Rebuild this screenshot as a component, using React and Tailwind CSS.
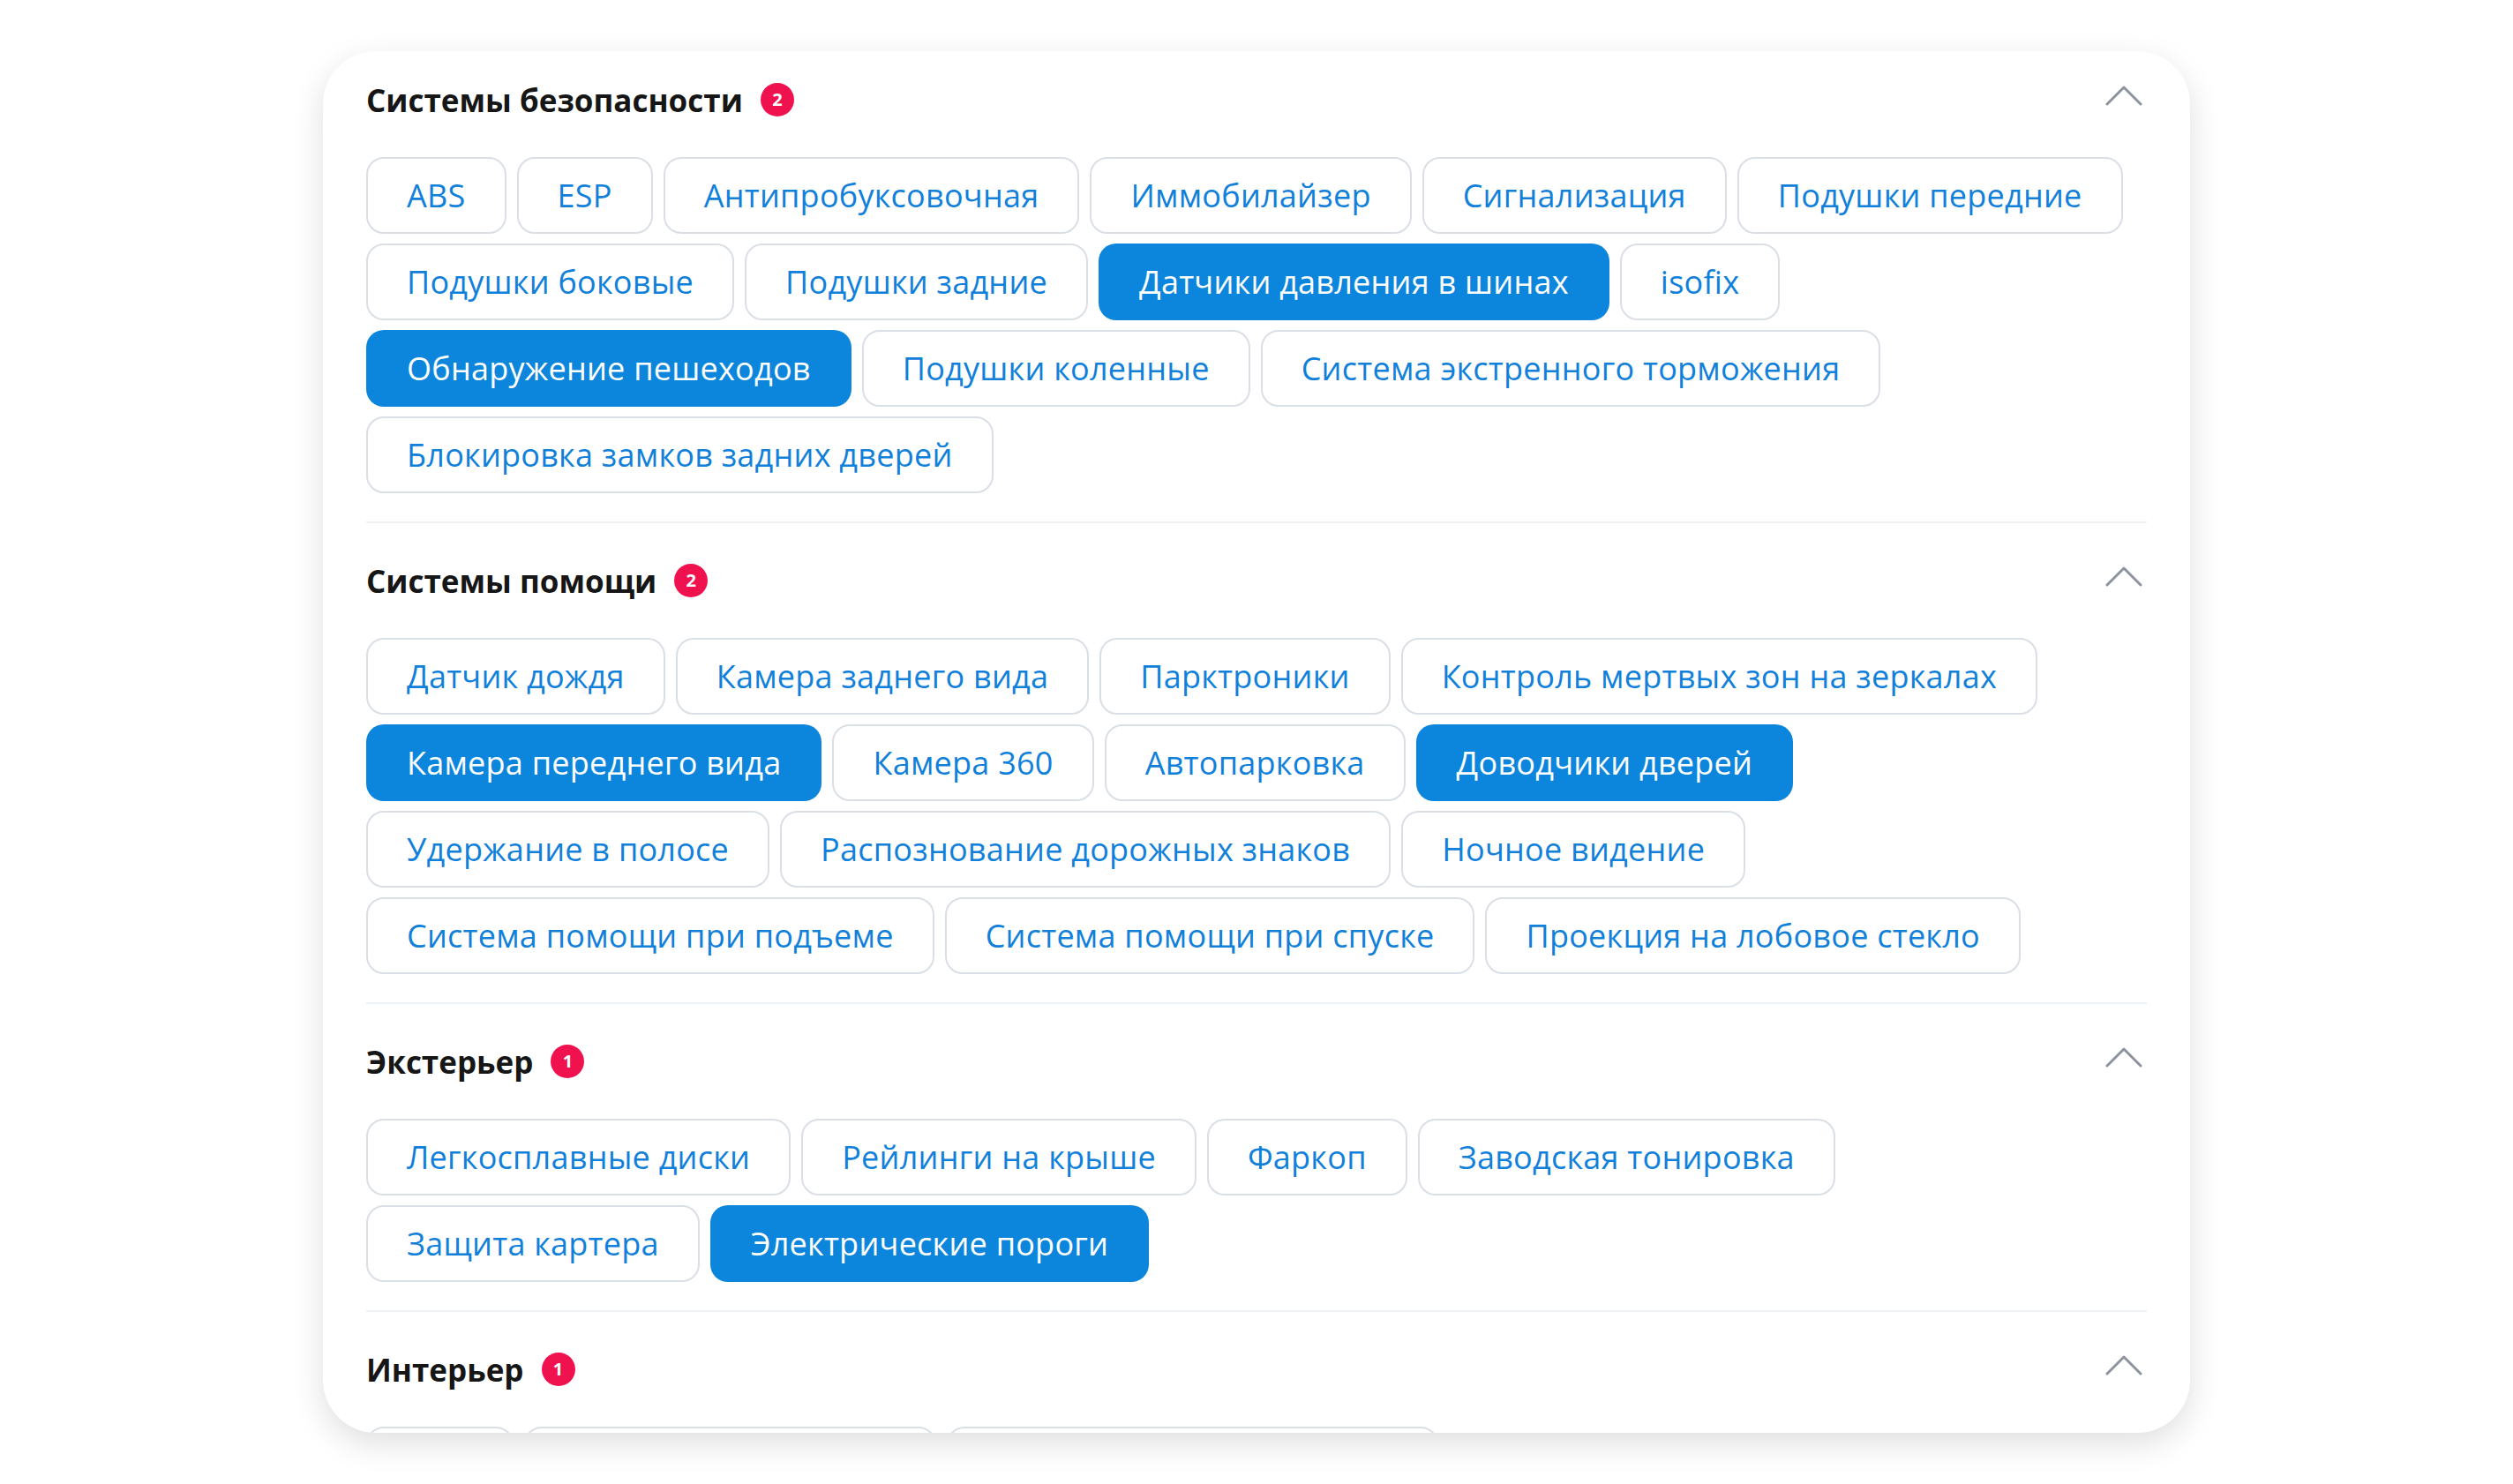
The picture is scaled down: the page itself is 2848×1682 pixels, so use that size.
const sections = [
  {
    title: 'Системы безопасности',
    count: 2,
    items: [
      { label: 'ABS' },
      { label: 'ESP' },
      { label: 'Антипробуксовочная' },
      { label: 'Иммобилайзер' },
      { label: 'Сигнализация' },
      { label: 'Подушки передние' },
      { label: 'Подушки боковые' },
      { label: 'Подушки задние' },
      { label: 'Датчики давления в шинах', active: true },
      { label: 'isofix' },
      { label: 'Обнаружение пешеходов', active: true },
      { label: 'Подушки коленные' },
      { label: 'Система экстренного торможения' },
      { label: 'Блокировка замков задних дверей' },
    ],
  },
  {
    title: 'Системы помощи',
    count: 2,
    items: [
      { label: 'Датчик дождя' },
      { label: 'Камера заднего вида' },
      { label: 'Парктроники' },
      { label: 'Контроль мертвых зон на зеркалах' },
      { label: 'Камера переднего вида', active: true },
      { label: 'Камера 360' },
      { label: 'Автопарковка' },
      { label: 'Доводчики дверей', active: true },
      { label: 'Удержание в полосе' },
      { label: 'Распознование дорожных знаков' },
      { label: 'Ночное видение' },
      { label: 'Система помощи при подъеме' },
      { label: 'Система помощи при спуске' },
      { label: 'Проекция на лобовое стекло' },
    ],
  },
  {
    title: 'Экстерьер',
    count: 1,
    items: [
      { label: 'Легкосплавные диски' },
      { label: 'Рейлинги на крыше' },
      { label: 'Фаркоп' },
      { label: 'Заводская тонировка' },
      { label: 'Защита картера' },
      { label: 'Электрические пороги', active: true },
    ],
  },
  {
    title: 'Интерьер',
    count: 1,
    items: [
      { label: 'Люк' },
      { label: 'Вентиляция сидений' },
      { label: 'Подогрев задних сидений' },
    ],
  },
]

function Chevron() {
  return (
    <svg width="42" height="26" viewBox="0 0 42 26" fill="none" className="shrink-0 mb-[10px] mr-[5px]">
      <polyline points="2,23 21,4 40,23" stroke="#8c939d" strokeWidth="3" strokeLinecap="round" strokeLinejoin="round" />
    </svg>
  )
}

function Chip({ label, active }) {
  return (
    <button
      className={
        active
          ? 'h-[87px] px-[46px] rounded-[20px] bg-[#0c86dc] text-white text-[36px] tracking-[0.25px] leading-none flex items-center whitespace-nowrap'
          : 'h-[87px] px-[44px] rounded-[20px] border-2 border-[#dadfe6] bg-white text-[#1080da] text-[36px] tracking-[0.25px] leading-none flex items-center whitespace-nowrap'
      }
    >
      {label}
    </button>
  )
}

function Section({ title, count, items, first, last }) {
  return (
    <section className={(first ? 'pt-[32px] ' : 'pt-[42px] ') + (last ? '' : 'pb-[32px] border-b-2 border-[#eef1f5]')}>
      <div className="h-[46px] flex items-center justify-between">
        <div className="flex items-center gap-[20px]">
          <h3 className="text-[35px] font-bold text-[#161616] leading-none">{title}</h3>
          <span className="w-[38px] h-[38px] rounded-full bg-[#f0114f] text-white text-[20px] font-bold flex items-center justify-center">
            {count}
          </span>
        </div>
        <Chevron />
      </div>
      <div className="mt-[42px] flex flex-wrap gap-x-[12px] gap-y-[11px]">
        {items.map((it) => (
          <Chip key={it.label} {...it} />
        ))}
      </div>
    </section>
  )
}

export default function App() {
  return (
    <div className="min-h-screen bg-white pt-[58px]" style={{ fontFamily: '"Open Sans", "Noto Sans", sans-serif' }}>
      <div className="mx-auto w-[2116px] h-[1566px] overflow-hidden rounded-[60px] bg-white px-[49px] shadow-[0_12px_36px_rgba(0,0,0,0.13)]">
        {sections.map((s, i) => (
          <Section key={s.title} {...s} first={i === 0} last={i === sections.length - 1} />
        ))}
      </div>
    </div>
  )
}
